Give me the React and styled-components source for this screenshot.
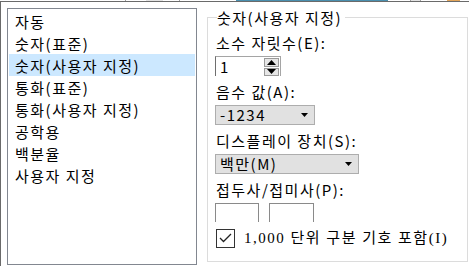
import React from 'react';
import styled, { createGlobalStyle } from 'styled-components';

const GlobalStyle = createGlobalStyle`
  html, body {
    margin: 0;
    padding: 0;
    background: #fff;
  }
  body {
    font-family: "Noto Sans CJK KR", "Noto Sans", sans-serif;
    font-size: 15px;
    letter-spacing: 1.5px;
    color: #000;
  }
`;

const categories = [
  '자동',
  '숫자(표준)',
  '숫자(사용자 지정)',
  '통화(표준)',
  '통화(사용자 지정)',
  '공학용',
  '백분율',
  '사용자 지정',
];

// bits of the window above that peek in at the very top
const stripBits = [
  [125, '#fff'], [1, '#a0a0a0'], [20, '#fff'], [17, '#e3e3e3'],
  [16, '#fff'], [1, '#a0a0a0'], [56, '#fff'], [152, '#4a8fae'],
  [22, '#fff'], [1, '#a0a0a0'], [9, '#e3e3e3'], [1, '#a0a0a0'],
  [26, '#fff'], [13, '#e2a55a'],
];

export default function App() {
  return (
    <>
      <GlobalStyle />
      <Window>
        <Strip>
          {stripBits.map(([w, c], i) => (
            <StripSeg key={i} $w={w} $c={c} />
          ))}
        </Strip>
        <Frame>
          <ListBox>
            {categories.map((c, i) => (
              <Item key={c} $selected={i === 2}>{c}</Item>
            ))}
          </ListBox>

          <GroupBox>
            <Legend>숫자(사용자 지정)</Legend>

            <Label $first>소수 자릿수(E):</Label>
            <SpinBox>
              <SpinValue>1</SpinValue>
              <SpinButtons>
                <SpinBtn>
                  <svg width="9" height="5" viewBox="0 0 9 5"><polygon points="0,5 9,5 4.5,0" fill="#000" /></svg>
                </SpinBtn>
                <SpinBtn>
                  <svg width="9" height="5" viewBox="0 0 9 5"><polygon points="0,0 9,0 4.5,5" fill="#000" /></svg>
                </SpinBtn>
              </SpinButtons>
            </SpinBox>

            <Label>음수 값(A):</Label>
            <Select $w={100}>
              <span>-1234</span>
              <Arrow />
            </Select>

            <Label>디스플레이 장치(S):</Label>
            <Select $w={144}>
              <span>백만(M)</span>
              <Arrow />
            </Select>

            <Label>접두사/접미사(P):</Label>
            <AffixRow>
              <AffixBox $w={44} />
              <AffixBox $w={45} />
            </AffixRow>

            <CheckRow>
              <CheckBox>
                <svg width="13" height="10" viewBox="0 0 13 10">
                  <polyline points="1,5 4.5,8.5 12,1" fill="none" stroke="#222" strokeWidth="1.3" />
                </svg>
              </CheckBox>
              <CheckText>1,000 단위 구분 기호 포함(I)</CheckText>
            </CheckRow>
          </GroupBox>
        </Frame>
      </Window>
    </>
  );
}

function Arrow() {
  return (
    <svg width="7" height="4" viewBox="0 0 7 4">
      <polygon points="0,0 7,0 3.5,4" fill="#000" />
    </svg>
  );
}

const Window = styled.div`
  width: 469px;
  height: 266px;
  display: flex;
  flex-direction: column;
  overflow: hidden;
`;

const Strip = styled.div`
  display: flex;
  height: 1px;
  flex-shrink: 0;
`;

const StripSeg = styled.span`
  width: ${p => p.$w}px;
  background: ${p => p.$c};
`;

const Frame = styled.div`
  flex: 1;
  display: flex;
  align-items: flex-start;
  gap: 10px;
  border-top: 1px solid #6a6a6a;
  border-left: 1px solid #6a6a6a;
  padding: 6px 0 0 6px;
`;

const ListBox = styled.ul`
  box-sizing: border-box;
  width: 190px;
  height: 257px;
  margin: 0;
  padding: 1px;
  list-style: none;
  border: 1px solid #828790;
  flex-shrink: 0;
`;

const Item = styled.li`
  height: 22px;
  line-height: 23px;
  padding-left: 6px;
  white-space: nowrap;
  background: ${p => (p.$selected ? '#cce8ff' : 'transparent')};
`;

const GroupBox = styled.fieldset`
  box-sizing: border-box;
  width: 261px;
  height: 254px;
  margin: 0;
  padding: 0 0 0 7px;
  min-width: 0;
  border: 1px solid #dcdcdc;
  display: flex;
  flex-direction: column;
  align-items: flex-start;
`;

const Legend = styled.legend`
  margin-left: 2px;
  padding: 2px 3px 0 0;
  line-height: 16px;
`;

const Label = styled.div`
  height: 20px;
  line-height: 20px;
  padding-left: 1px;
  margin-top: ${p => (p.$first ? 7 : 6)}px;
  white-space: nowrap;
`;

const SpinBox = styled.div`
  box-sizing: border-box;
  width: 66px;
  height: 20px;
  margin-top: 3px;
  display: flex;
  border-top: 1px solid #a5a5a5;
  border-left: 1px solid #6e6e6e;
  border-right: 1px solid #a5a5a5;
`;

const SpinValue = styled.div`
  flex: 1;
  padding-left: 4px;
  line-height: 19px;
`;

const SpinButtons = styled.div`
  width: 15px;
  display: flex;
  flex-direction: column;
  gap: 1px;
  padding: 1px 1px 0 0;
`;

const SpinBtn = styled.div`
  flex: 1;
  display: flex;
  align-items: center;
  justify-content: center;
  background: #e6e6e6;
  border: 1px solid #9a9a9a;
`;

const Select = styled.div`
  box-sizing: border-box;
  width: ${p => p.$w}px;
  height: 20px;
  margin-top: 3px;
  padding: 0 6px 0 4px;
  display: flex;
  align-items: center;
  justify-content: space-between;
  background: #e1e1e1;
  border: 1px solid #adadad;
  line-height: 18px;
`;

const AffixRow = styled.div`
  display: flex;
  gap: 10px;
  margin-top: 3px;
`;

const AffixBox = styled.div`
  box-sizing: border-box;
  width: ${p => p.$w}px;
  height: 19px;
  border: 1px solid #8a8a8a;
  border-bottom: none;
`;

const CheckRow = styled.div`
  display: flex;
  align-items: center;
  gap: 9px;
  margin-top: 6px;
  padding-left: 1px;
`;

const CheckBox = styled.div`
  box-sizing: border-box;
  width: 19px;
  height: 19px;
  border: 1px solid #333;
  background: #fff;
  display: flex;
  align-items: center;
  justify-content: center;
`;

const CheckText = styled.span`
  font-family: "Liberation Serif", "Noto Sans CJK KR", serif;
  line-height: 20px;
  white-space: nowrap;
`;
